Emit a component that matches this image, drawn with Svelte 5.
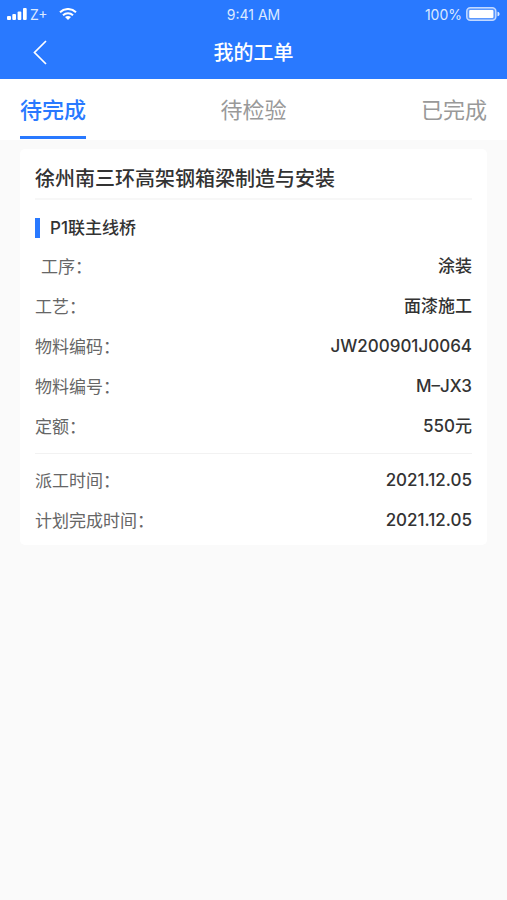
<script lang="ts">
  interface Field {
    label: string;
    value: string;
    indent?: boolean;
  }

  const tabs = ["待完成", "待检验", "已完成"];
  let active = $state(0);

  const order = {
    project: "徐州南三环高架钢箱梁制造与安装",
    part: "P1联主线桥",
    details: [
      { label: "工序：", value: "涂装", indent: true },
      { label: "工艺：", value: "面漆施工" },
      { label: "物料编码：", value: "JW200901J0064" },
      { label: "物料编号：", value: "M–JX3" },
      { label: "定额：", value: "550元" },
    ] as Field[],
    dates: [
      { label: "派工时间：", value: "2021.12.05" },
      { label: "计划完成时间：", value: "2021.12.05" },
    ] as Field[],
  };
</script>

{#snippet fieldList(fields: Field[])}
  <dl class="fields">
    {#each fields as field (field.label)}
      <div class="field">
        <dt class:indent={field.indent}>{field.label}</dt>
        <dd>{field.value}</dd>
      </div>
    {/each}
  </dl>
{/snippet}

<div class="page" lang="zh-CN">
  <header class="top">
    <div class="status-bar">
      <div class="status-left">
        <svg width="20" height="12" viewBox="0 0 20 12" fill="#fff" aria-hidden="true">
          <rect x="0" y="8" width="4" height="4" rx="1" />
          <rect x="5.3" y="6" width="3.7" height="6" rx="1" />
          <rect x="10.6" y="3.5" width="3.7" height="8.5" rx="1" />
          <rect x="16" y="0" width="3.7" height="12" rx="1" />
        </svg>
        <span class="carrier">Z+</span>
        <svg class="wifi" width="18" height="12" viewBox="0 0 18 12" aria-hidden="true">
          <g fill="none" stroke="#fff" stroke-width="2">
            <path d="M1 4.2C5.5-.1 12.5-.1 17 4.2" />
            <path d="M4 7.2C6.8 4.5 11.2 4.5 14 7.2" />
          </g>
          <path d="M9 12L6 9C7.7 7.5 10.3 7.5 12 9Z" fill="#fff" />
        </svg>
      </div>
      <span>9:41 AM</span>
      <div class="status-right">
        <span>100%</span>
        <svg width="34" height="14" viewBox="0 0 34 14" aria-hidden="true">
          <rect x=".8" y=".8" width="29" height="12.4" rx="3.5" fill="#5b98ff" stroke="#c3d9ff" stroke-width="1.5" />
          <rect x="3.2" y="3" width="24.2" height="8" rx="1" fill="#fff" />
          <path d="M31.5 4.8C34.3 5 34.3 9 31.5 9.2Z" fill="#dce9ff" />
        </svg>
      </div>
    </div>
    <div class="nav">
      <button class="back" aria-label="返回">
        <svg width="14" height="25" viewBox="0 0 14 25" fill="none" stroke="#fff" stroke-width="1.7">
          <path d="M13 1L1.5 12.5L13 24" />
        </svg>
      </button>
      <h1>我的工单</h1>
    </div>
  </header>

  <nav class="tabs">
    {#each tabs as tab, i}
      <button class="tab" class:active={active === i} onclick={() => (active = i)}>{tab}</button>
    {/each}
  </nav>

  <main>
    <article class="card">
      <h2>{order.project}</h2>
      <h3>{order.part}</h3>
      {@render fieldList(order.details)}
      <hr />
      {@render fieldList(order.dates)}
    </article>
  </main>
</div>

<style>
  :global(body) {
    background: #fafafa;
  }
  .page {
    min-height: 100vh;
    background: #fafafa;
    color: #333;
    font-family: Inter, "Noto Sans CJK SC", sans-serif;
  }
  h1,
  h2,
  h3,
  dl,
  dd {
    margin: 0;
    font-weight: 500;
  }
  button {
    padding: 0;
    border: none;
    background: none;
    color: inherit;
    font-family: inherit;
    cursor: pointer;
  }
  .top {
    padding-bottom: 3px;
    background: #2979ff;
    color: #fff;
  }
  .status-bar {
    display: grid;
    grid-template-columns: 1fr auto 1fr;
    align-items: center;
    height: 28px;
    padding: 0 7px;
    font-size: 14px;
    color: #dce9ff;
  }
  .status-left,
  .status-right {
    display: flex;
    align-items: center;
    gap: 3px;
  }
  .status-right {
    justify-content: flex-end;
    gap: 4px;
  }
  .wifi {
    margin-left: 8px;
  }
  .nav {
    display: grid;
    grid-template-columns: 1fr auto 1fr;
    align-items: center;
    height: 48px;
    padding: 0 33px;
  }
  .back {
    display: flex;
    justify-self: start;
  }
  h1 {
    padding-top: 2px;
    font-size: 20px;
    line-height: 28px;
  }
  .tabs {
    display: flex;
    justify-content: space-between;
    height: 60px;
    padding: 0 20px 1px;
    background: #fff;
  }
  .tab {
    border-bottom: 3px solid transparent;
    font-size: 22px;
    color: #999;
  }
  .tab.active {
    border-color: #2979ff;
    color: #2979ff;
    font-weight: 500;
  }
  main {
    padding: 9px 20px;
  }
  .card {
    padding: 16px 15px 5px;
    border-radius: 5px;
    background: #fff;
  }
  h2 {
    padding-bottom: 5px;
    border-bottom: 2px solid #f7f7f7;
    font-size: 20px;
    line-height: 28px;
  }
  h3 {
    display: flex;
    align-items: center;
    gap: 10px;
    margin: 16px 0 6px;
    font-size: 17px;
    line-height: 24px;
  }
  h3::before {
    content: "";
    width: 5px;
    height: 20px;
    background: #2979ff;
  }
  .fields {
    font-size: 17px;
    line-height: 40px;
  }
  .field {
    display: flex;
    justify-content: space-between;
  }
  dt {
    color: #666;
    font-family: "Noto Sans CJK SC", sans-serif;
    font-weight: 400;
  }
  .indent {
    padding-left: 6px;
  }
  hr {
    margin: 7px 0 6px;
    border: none;
    border-top: 1px solid #f2f2f2;
  }
</style>
